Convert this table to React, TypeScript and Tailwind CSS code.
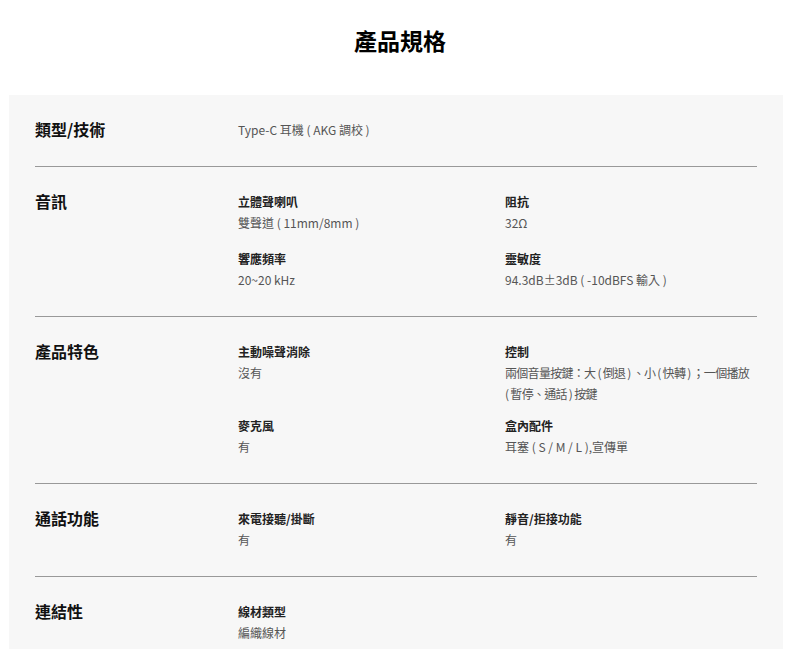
const font = { fontFamily: '"Liberation Sans Narrow", "Noto Sans CJK TC", sans-serif' }

type Item = { title: string; value: React.ReactNode }
type Row = { label: string; items: Item[]; gap: string }

const rows: Row[] = [
  {
    label: '音訊',
    gap: 'gap-y-[15px]',
    items: [
      { title: '立體聲喇叭', value: '雙聲道 ( 11mm/8mm )' },
      { title: '阻抗', value: '32Ω' },
      { title: '響應頻率', value: '20~20 kHz' },
      { title: '靈敏度', value: '94.3dB±3dB ( -10dBFS 輸入 )' },
    ],
  },
  {
    label: '產品特色',
    gap: 'gap-y-[11px]',
    items: [
      { title: '主動噪聲消除', value: '沒有' },
      {
        title: '控制',
        value: (
          <span className="tracking-[-0.7px]">
            兩個音量按鍵：大 ( 倒退 ) 、小 ( 快轉 ) ；一個播放
            <br />( 暫停、通話 ) 按鍵
          </span>
        ),
      },
      { title: '麥克風', value: '有' },
      { title: '盒內配件', value: '耳塞 ( S / M / L ),宣傳單' },
    ],
  },
  {
    label: '通話功能',
    gap: 'gap-y-[15px]',
    items: [
      { title: '來電接聽/掛斷', value: '有' },
      { title: '靜音/拒接功能', value: '有' },
    ],
  },
  {
    label: '連結性',
    gap: 'gap-y-[15px]',
    items: [{ title: '線材類型', value: '編織線材' }],
  },
]

function SpecRow({ label, children, last }: { label: string; children: React.ReactNode; last?: boolean }) {
  return (
    <div className={`flex pt-[24px] pb-[26px] ${last ? '' : 'border-b border-[#999]'}`}>
      <div className="w-[203px] shrink-0 text-[16px] leading-[21px] font-bold text-[#111]">{label}</div>
      <div className="flex-1">{children}</div>
    </div>
  )
}

export default function App() {
  return (
    <div className="min-h-screen bg-white" style={font}>
      <h2 className="pt-[22px] pb-[37px] text-center text-[23px] leading-[36px] font-bold text-black">產品規格</h2>

      <div className="ml-[9px] mr-[17px] bg-[#f7f7f7] px-[26px]">
        <SpecRow label="類型/技術">
          <p className="text-[12px] leading-[21px] text-[#555]">Type-C 耳機 ( AKG 調校 )</p>
        </SpecRow>

        {rows.map((row, i) => (
          <SpecRow key={row.label} label={row.label} last={i === rows.length - 1}>
            <div className={`grid grid-cols-[267px_1fr] ${row.gap}`}>
              {row.items.map((item) => (
                <div key={item.title} className="text-[12px] leading-[21px] whitespace-nowrap">
                  <p className="font-bold text-[#222]">{item.title}</p>
                  <p className="text-[#555]">{item.value}</p>
                </div>
              ))}
            </div>
          </SpecRow>
        ))}
      </div>
    </div>
  )
}
